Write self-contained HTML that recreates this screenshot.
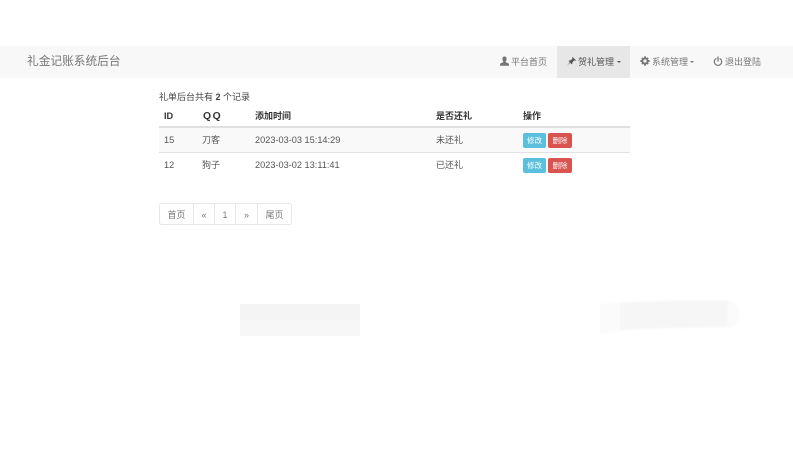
<!DOCTYPE html>
<html lang="zh">
<head>
<meta charset="utf-8">
<title>礼金记账系统后台</title>
<style>
html,body{margin:0;padding:0;background:#fff;}
body{width:793px;height:453px;position:relative;overflow:hidden;font-family:"Liberation Sans","Noto Sans CJK SC",sans-serif;font-size:9.2px;color:#555;}
#w{position:absolute;left:0;top:0;width:793px;height:453px;filter:blur(.35px);}
.a{position:absolute;white-space:nowrap;line-height:12px;}
.b{position:absolute;}
.nav{color:#777;font-size:9px;}
.th{font-weight:bold;color:#333;}
.btn{position:absolute;height:14.5px;line-height:15.5px;border-radius:2px;color:#fff;font-size:7.5px;text-align:center;}
.info{background:#5bc0de;left:523px;width:23px;}
.danger{background:#d9534f;left:548px;width:24px;}
.pg{position:absolute;top:203px;height:22px;line-height:22px;text-align:center;color:#777;font-size:9px;border:1px solid #e8e8e8;box-sizing:border-box;background:#fff;}
</style>
</head>
<body>
<div id="w">
<div class="b" style="left:0;top:46px;width:793px;height:32px;background:#f8f8f8;"></div>
<div class="b" style="left:557px;top:46px;width:73px;height:32px;background:#e7e7e7;"></div>

<div class="a" style="left:27px;top:54px;font-size:11.7px;line-height:15px;color:#777;">礼金记账系统后台</div>

<svg class="b" style="left:499px;top:56px;" width="11" height="11" viewBox="0 0 11 11"><path d="M5.5 0.5C4 0.5 3.2 1.6 3.4 3.2C3.5 4.2 3.9 4.9 4.3 5.4L4.2 6.3C3 6.8 1.3 7.2 1 8.2V9.8H10V8.2C9.7 7.2 8 6.8 6.8 6.3L6.7 5.4C7.1 4.9 7.5 4.2 7.6 3.2C7.8 1.6 7 0.5 5.5 0.5Z" fill="#777"/></svg>
<div class="a nav" style="left:511px;top:56px;">平台首页</div>

<svg class="b" style="left:566px;top:56px;" width="11" height="11" viewBox="0 0 11 11"><path d="M6.5 1L10 4.3L9.2 4.8L8.2 4.4L6.4 6.4L6.2 8L5.6 8.2L4.2 6.8L1 9.6L3.8 6.3L2.6 5.1L2.9 4.6L4.5 4.4L6.5 2.6L6.1 1.6Z" fill="#555"/></svg>
<div class="a nav" style="left:578px;top:56px;color:#555;">贺礼管理</div>
<div class="b" style="left:616.5px;top:61px;width:0;height:0;border-left:2.2px solid transparent;border-right:2.2px solid transparent;border-top:2.2px solid #555;"></div>

<svg class="b" style="left:640px;top:56px;" width="10" height="10" viewBox="0 0 10 10"><circle cx="5" cy="5" r="2.6" fill="none" stroke="#777" stroke-width="1.9"/><path d="M4 0.4H6V2H4ZM4 8H6V9.6H4ZM0.4 4H2V6H0.4ZM8 4H9.6V6H8ZM1.2 2.6L2.6 1.2L3.4 2.2L2.2 3.4ZM7.4 1.2L8.8 2.6L7.8 3.4L6.6 2.2ZM1.2 7.4L2.2 6.6L3.4 7.8L2.6 8.8ZM7.8 6.6L8.8 7.4L7.4 8.8L6.6 7.8Z" fill="#777"/></svg>
<div class="a nav" style="left:652px;top:56px;">系统管理</div>
<div class="b" style="left:690px;top:61px;width:0;height:0;border-left:2.2px solid transparent;border-right:2.2px solid transparent;border-top:2.2px solid #777;"></div>

<svg class="b" style="left:713px;top:56px;" width="10" height="11" viewBox="0 0 10 11"><path d="M3 2.6A3.7 3.7 0 1 0 7 2.6" fill="none" stroke="#777" stroke-width="1.2" stroke-linecap="round"/><path d="M5 1V5" stroke="#777" stroke-width="1.3" stroke-linecap="round"/></svg>
<div class="a nav" style="left:725px;top:56px;">退出登陆</div>

<div class="a" style="left:159px;top:91px;font-size:9px;color:#444;">礼单后台共有 <b>2</b> 个记录</div>

<div class="a th" style="left:164px;top:110px;">ID</div>
<div class="a th" style="left:203px;top:110.5px;letter-spacing:1.6px;font-size:10.4px;">QQ</div>
<div class="a th" style="left:255px;top:110px;font-size:9px;">添加时间</div>
<div class="a th" style="left:436px;top:110px;font-size:9px;">是否还礼</div>
<div class="a th" style="left:523px;top:110px;font-size:9px;">操作</div>

<div class="b" style="left:159px;top:126px;width:471px;height:2px;background:#e0e0e0;"></div>
<div class="b" style="left:159px;top:128px;width:471px;height:24px;background:#f9f9f9;"></div>
<div class="b" style="left:159px;top:152px;width:471px;height:1px;background:#e2e2e2;"></div>

<div class="a" style="left:164px;top:134px;">15</div>
<div class="a" style="left:202px;top:134px;font-size:9px;">刀客</div>
<div class="a" style="left:255px;top:134px;">2023-03-03 15:14:29</div>
<div class="a" style="left:436px;top:134px;font-size:9px;">未还礼</div>
<div class="btn info" style="top:133px;">修改</div>
<div class="btn danger" style="top:133px;">删除</div>

<div class="a" style="left:164px;top:159px;">12</div>
<div class="a" style="left:202px;top:159px;font-size:9px;">狗子</div>
<div class="a" style="left:255px;top:159px;">2023-03-02 13:11:41</div>
<div class="a" style="left:436px;top:159px;font-size:9px;">已还礼</div>
<div class="btn info" style="top:158px;">修改</div>
<div class="btn danger" style="top:158px;">删除</div>

<div class="pg" style="left:159px;width:35px;border-radius:3px 0 0 3px;">首页</div>
<div class="pg" style="left:193px;width:22px;">«</div>
<div class="pg" style="left:214px;width:22px;">1</div>
<div class="pg" style="left:235px;width:23px;">»</div>
<div class="pg" style="left:257px;width:35px;border-radius:0 3px 3px 0;">尾页</div>

<div class="b" style="left:240px;top:304px;width:120px;height:16px;background:#f4f4f4;"></div>
<div class="b" style="left:240px;top:320px;width:120px;height:16px;background:#f7f7f7;"></div>
<svg class="b" style="left:600px;top:298px;filter:blur(.8px);" width="142" height="40" viewBox="0 0 142 40"><path d="M0 6L20 4Q50 2 125 2Q136 2 138 10L140 18L137 26Q133 30 125 30Q60 30 20 33L0 36Z" fill="#fbfbfb"/><path d="M20 5Q50 3 125 3Q128 3 128 10V22Q128 29 120 29Q60 29 20 32Z" fill="#f6f6f6"/></svg>
</div>
</body>
</html>
